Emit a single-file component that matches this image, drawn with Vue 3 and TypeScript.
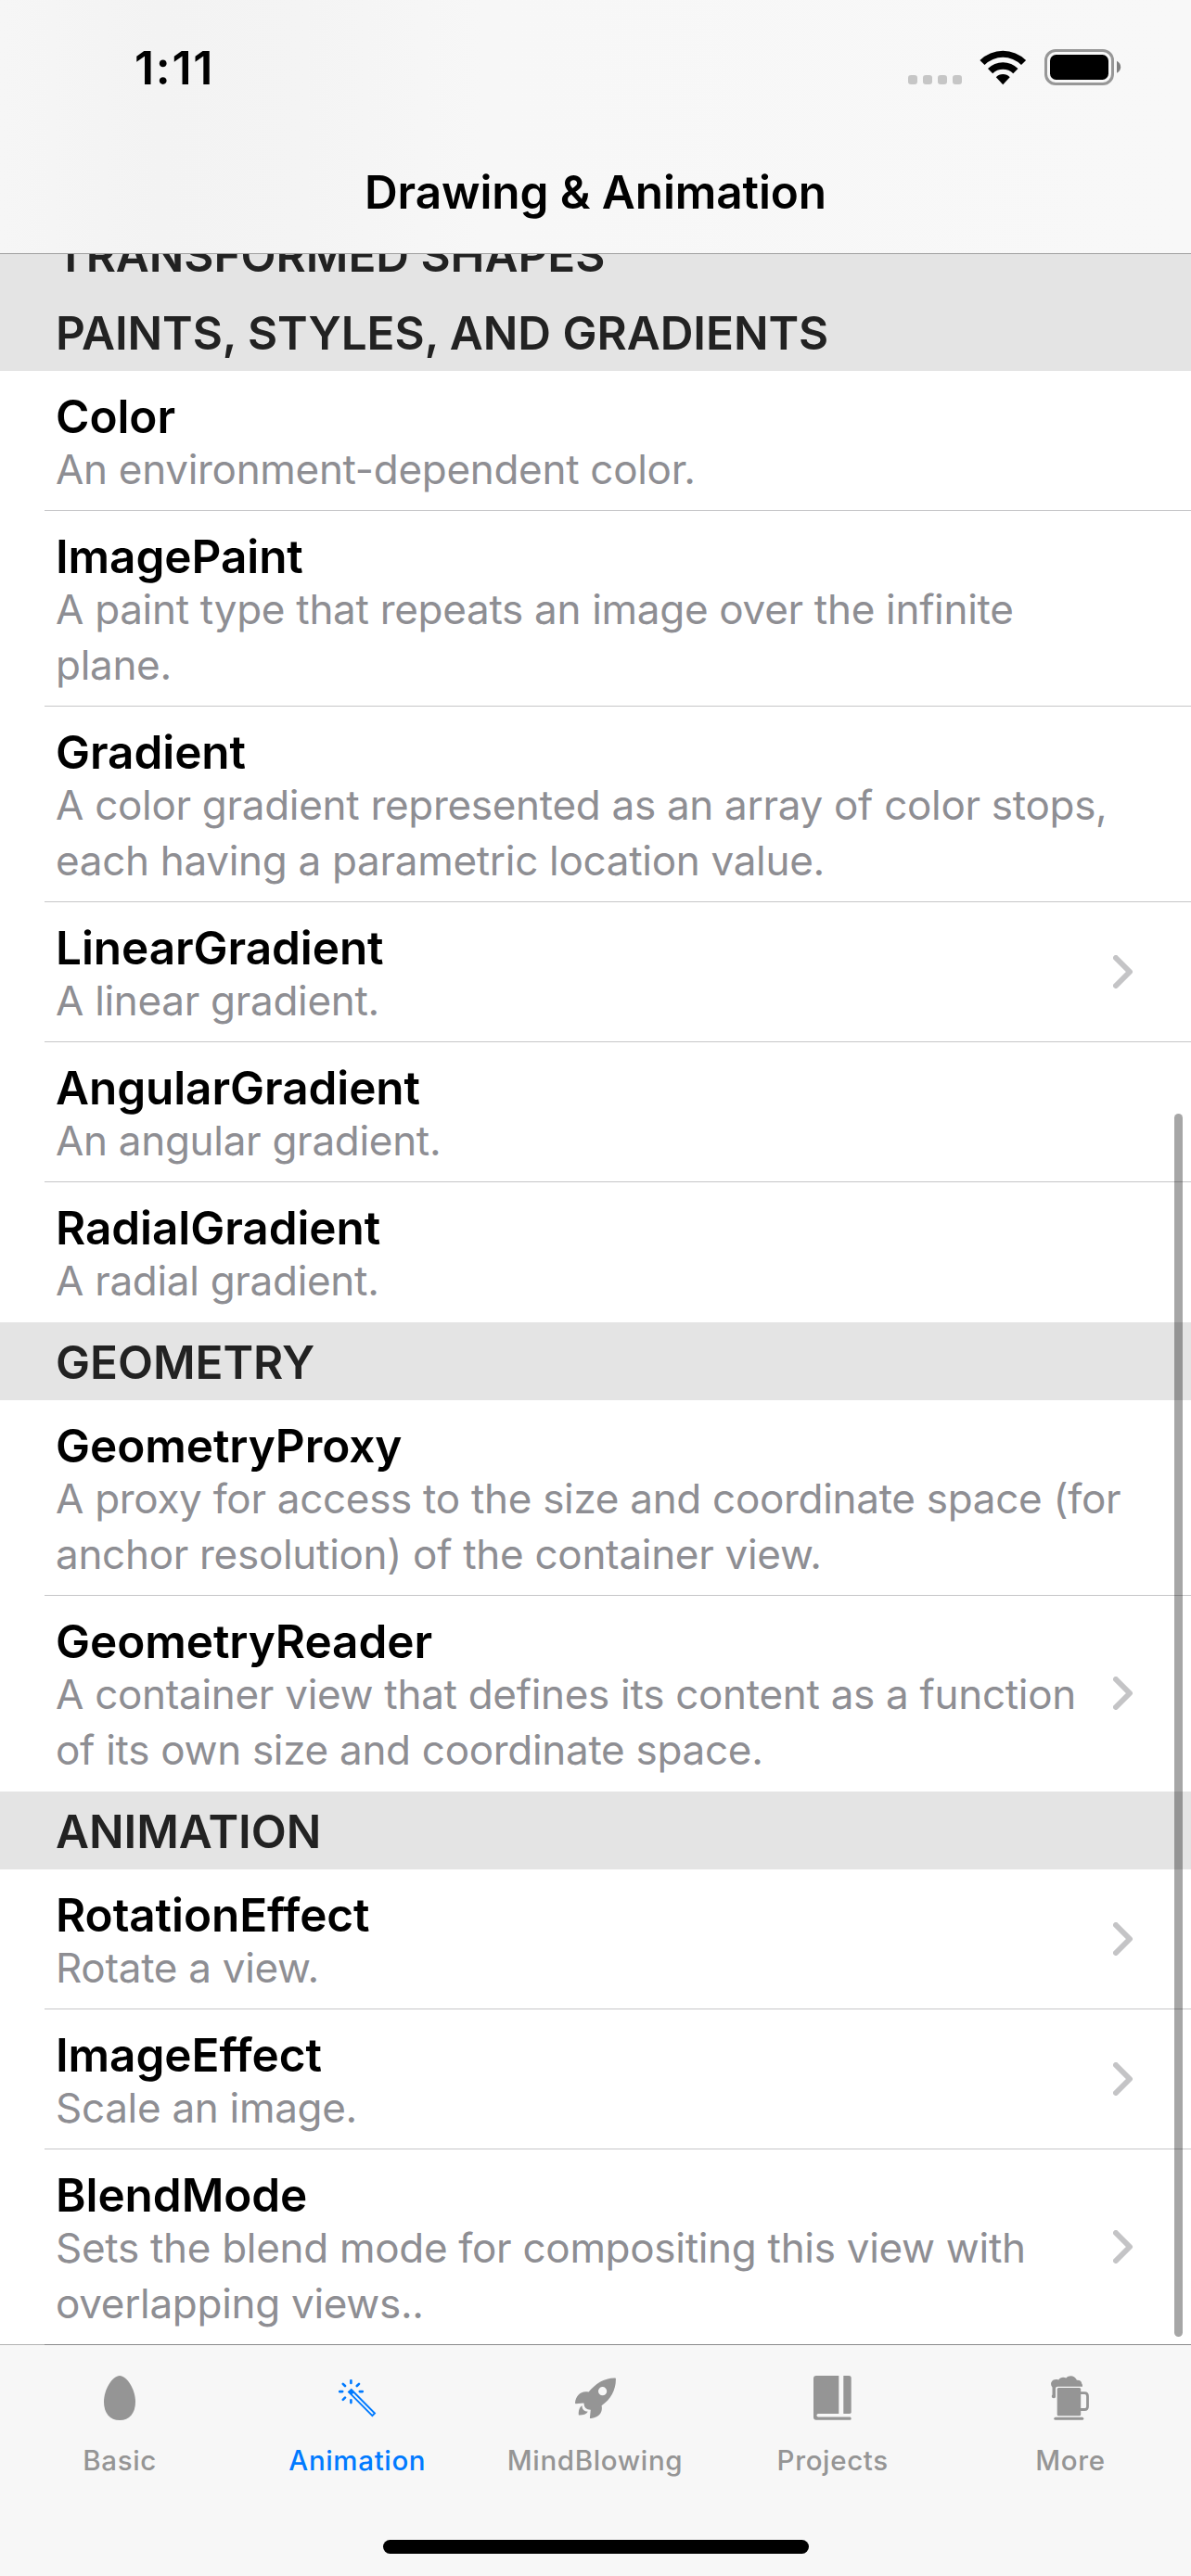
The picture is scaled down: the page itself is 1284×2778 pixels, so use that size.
<script setup lang="ts">
interface Item {
  title: string
  text: string
  link?: boolean
}
interface Section {
  name: string
  items: Item[]
}

const sections: Section[] = [
  { name: 'TRANSFORMED SHAPES', items: [] },
  {
    name: 'PAINTS, STYLES, AND GRADIENTS',
    items: [
      { title: 'Color', text: 'An environment-dependent color.' },
      { title: 'ImagePaint', text: 'A paint type that repeats an image over the infinite\nplane.' },
      { title: 'Gradient', text: 'A color gradient represented as an array of color stops,\neach having a parametric location value.' },
      { title: 'LinearGradient', text: 'A linear gradient.', link: true },
      { title: 'AngularGradient', text: 'An angular gradient.' },
      { title: 'RadialGradient', text: 'A radial gradient.' },
    ],
  },
  {
    name: 'GEOMETRY',
    items: [
      { title: 'GeometryProxy', text: 'A proxy for access to the size and coordinate space (for\nanchor resolution) of the container view.' },
      { title: 'GeometryReader', text: 'A container view that defines its content as a function\nof its own size and coordinate space.', link: true },
    ],
  },
  {
    name: 'ANIMATION',
    items: [
      { title: 'RotationEffect', text: 'Rotate a view.', link: true },
      { title: 'ImageEffect', text: 'Scale an image.', link: true },
      { title: 'BlendMode', text: 'Sets the blend mode for compositing this view with\noverlapping views..', link: true },
    ],
  },
]

const tabs = ['Basic', 'Animation', 'MindBlowing', 'Projects', 'More']
const activeTab = 'Animation'
</script>

<template>
  <div class="screen">
    <header class="nav">
      <div class="status">
        <span class="time">1:11</span>
        <div class="indicators">
          <div class="dots"><i v-for="n in 4" :key="n"></i></div>
          <svg class="wifi" width="51" height="38" viewBox="0 0 51 38">
            <path d="M.4 10.9A35.6 35.6 0 0 1 50.1 10.9L45 16A28 28 0 0 0 5.5 16Z" />
            <path d="M9 20A22.7 22.7 0 0 1 41.5 20L36.3 25.3A15.4 15.4 0 0 0 14.2 25.3Z" />
            <path d="M17.8 29.2A10.5 10.5 0 0 1 32.7 29.2L25.25 37.2Z" />
          </svg>
          <svg class="battery" width="83" height="40" viewBox="0 0 83 40">
            <rect x="1.5" y="1.5" width="72" height="36" rx="10.5" fill="none" stroke="#979797" stroke-width="3" />
            <rect x="6" y="6" width="63" height="27" rx="6.5" />
            <path d="M78 12.8Q82.2 15 82.2 19.3T78 25.8Z" fill="#7f7f7f" />
          </svg>
        </div>
      </div>
      <h1>Drawing &amp; Animation</h1>
    </header>

    <main class="list">
      <section v-for="s in sections" :key="s.name">
        <h2>{{ s.name }}</h2>
        <article v-for="item in s.items" :key="item.title" class="row">
          <div class="copy">
            <h3>{{ item.title }}</h3>
            <p>{{ item.text }}</p>
          </div>
          <svg v-if="item.link" class="chevron" width="22" height="36" viewBox="0 0 22 36">
            <path d="M3 3L18 18L3 33" fill="none" stroke="#c4c4c6" stroke-width="6" stroke-linecap="round" stroke-linejoin="round" />
          </svg>
        </article>
      </section>
      <div class="scrollbar"></div>
    </main>

    <footer class="tabbar">
      <nav class="tabs">
        <div v-for="t in tabs" :key="t" class="tab" :class="{ active: t === activeTab }">
          <div class="glyph">
            <svg v-if="t === 'Basic'" width="34" height="48" viewBox="0 0 34 48" fill="currentColor">
              <path d="M17 0C24.5 0 34 14.5 34 28C34 40.5 27.5 48 17 48S0 40.5 0 28C0 14.5 9.5 0 17 0Z" />
            </svg>
            <svg v-else-if="t === 'Animation'" width="41" height="41" viewBox="0 0 41 41" fill="none" stroke="currentColor">
              <path d="M13.4 1.2V4M13.4 22.3V25.1M1.2 13.1H4.2M22.8 13.1H25.8M4.8 4.8L7 7M22 4.8L19.8 7M7 19.6L4.8 21.8" stroke-width="2.6" stroke-linecap="round" />
              <path d="M13.7 11L39 36.5L36.4 39.1L11 13.6Z" stroke-width="1.9" />
              <path d="M13.7 10.4L17 13.7L13.7 17L10.4 13.7Z" fill="currentColor" stroke="none" />
            </svg>
            <svg v-else-if="t === 'MindBlowing'" width="44" height="44" viewBox="0 0 44 44" fill="currentColor">
              <path fill-rule="evenodd" d="M43.3.4Q43.8.5 43.9 1.2C44.2 13 38.5 23.8 28.6 30.2C30.2 38.2 25 43.2 16.4 44.1Q15.8 44.1 15.9 43.4L16.8 34.7Q9.9 34.9 9.4 27.4L.8 28.2Q-.1 28.2 0 27.3C.7 19.2 6.6 13.6 14.6 15.6C21.6 6.7 31.6 .1 43.3.4ZM29.6 10.1A4.6 4.6 0 1 0 29.6 19.3A4.6 4.6 0 1 0 29.6 10.1Z" />
              <path d="M7.4 30.2Q7.5 36.3 13.8 36.8C12.2 39.7 8.2 40.7 4.4 40.6Q3.8 40.6 3.8 40C3.6 36 4.6 31.8 7.4 30.2Z" />
            </svg>
            <svg v-else-if="t === 'Projects'" width="41" height="48" viewBox="0 0 41 48" fill="currentColor">
              <path d="M3 0H27.3V41H5.2Q3.4 41 3.4 42.8T5.2 44.6H39.4Q40.7 44.6 40.7 46.2T39.4 47.8H3Q0 47.8 0 44.8V3Q0 0 3 0Z" />
              <path d="M32.3 0H38.2Q40.7 0 40.7 2.5V39.3Q40.7 41 39 41H32.3Z" />
            </svg>
            <svg v-else width="42" height="48" viewBox="0 0 42 48" fill="currentColor">
              <path d="M34 11.7H7.2Q5 11.7 5 14V22.7Q5 24.3 2.9 24.3T.8 22.3Q.8 21.2 1.5 20.5V12.5Q-.6 10.5.3 7.3C1.3 4.3 4.8 3.2 8.2 4.4C9.8 1.9 13.2 1 16.3 2.5C19.3-.7 25-1 28 4.7C31 4.4 33.2 6 33.2 8.4Q34.2 9.4 34 11.7Z" />
              <rect x="6.7" y="13" width="25.5" height="30.3" rx="1.5" />
              <path d="M32 18.7H36.3Q39.5 18.7 39.5 22V33.2Q39.5 36.5 36.3 36.5H32" fill="none" stroke="currentColor" stroke-width="2.8" />
              <rect x="3.3" y="44.7" width="32" height="3.1" rx="1.5" />
            </svg>
          </div>
          <span>{{ t }}</span>
        </div>
      </nav>
      <div class="home"></div>
    </footer>
  </div>
</template>

<style>
body {
  margin: 0;
  background: #fff;
}
</style>

<style scoped>
.screen {
  display: flex;
  flex-direction: column;
  width: 1284px;
  height: 2778px;
  overflow: hidden;
  background: #fff;
  color: #000;
  font-family: Inter, "Liberation Sans", sans-serif;
  font-kerning: normal;
}
h1,
h2,
h3,
p {
  margin: 0;
}

.nav {
  box-sizing: border-box;
  flex: none;
  height: 274px;
  border-bottom: 1px solid #a0a0a0;
  background: linear-gradient(90deg, #f6f6f6 0, #f3f3f3 170px, #f4f4f4 330px, #f7f7f7 520px, #f8f8f8 100%);
}
.status {
  display: flex;
  justify-content: space-between;
  height: 132px;
  padding: 0 75px 0 145px;
}
.time {
  padding-top: 43px;
  font-size: 50px;
  font-weight: 600;
  line-height: 60px;
  letter-spacing: 1.7px;
}
.indicators {
  display: flex;
  align-items: flex-start;
  padding-top: 53px;
}
.dots {
  display: flex;
  gap: 6px;
  margin: 28px 19px 0 0;
}
.dots i {
  width: 10px;
  height: 10px;
  border-radius: 3px;
  background: #c6c6c6;
}
.wifi {
  margin: 1px 19px 0 0;
}
h1 {
  padding-top: 45px;
  font-size: 49.5px;
  font-weight: 600;
  line-height: 60px;
  letter-spacing: -0.1px;
  text-align: center;
}

.list {
  position: relative;
  flex: none;
  height: 2255px;
  display: flex;
  flex-direction: column;
  justify-content: flex-end;
  overflow: hidden;
}
h2 {
  height: 84px;
  padding-left: 60px;
  background: #e4e4e4;
  color: #222;
  font-size: 49.5px;
  font-weight: 600;
  line-height: 86px;
  letter-spacing: -0.05px;
  white-space: nowrap;
}
.row {
  display: flex;
  align-items: center;
  justify-content: space-between;
  margin-left: 48px;
  padding: 0 62px 0 12px;
  border-bottom: 1px solid #c6c6c8;
}
.row:last-child {
  border-bottom-color: transparent;
}
section:last-of-type .row:last-child {
  border-bottom-color: #c6c6c8;
}
.copy {
  padding: 18px 0 14px;
}
h3 {
  height: 58px;
  font-size: 49.5px;
  font-weight: 600;
  line-height: 62px;
  letter-spacing: -0.08px;
  white-space: nowrap;
}
p {
  color: #8e8e93;
  font-size: 44px;
  line-height: 60px;
  letter-spacing: -0.3px;
  white-space: pre;
}
.chevron {
  flex: none;
}
.scrollbar {
  position: absolute;
  top: 927px;
  right: 9px;
  width: 9px;
  height: 1319px;
  border-radius: 5px;
  background: rgba(0, 0, 0, 0.35);
}

.tabbar {
  position: relative;
  box-sizing: border-box;
  flex: none;
  display: flex;
  flex-direction: column;
  height: 250px;
  margin-top: -1px;
  border-top: 1px solid rgba(0, 0, 0, 0.3);
  background: #f7f7f7;
  background-clip: padding-box;
}
.tabs {
  display: flex;
  height: 210px;
  padding: 0 2px 0 1px;
}
.tab {
  flex: 1;
  display: flex;
  flex-direction: column;
  align-items: center;
  color: #959595;
}
.tab.active {
  color: #007aff;
}
.glyph {
  display: flex;
  align-items: center;
  height: 48px;
  margin-top: 33px;
}
.tab span {
  margin-top: 25px;
  font-size: 29.5px;
  font-weight: 500;
  line-height: 36px;
  letter-spacing: 0.65px;
}
.home {
  align-self: center;
  width: 459px;
  height: 15px;
  border-radius: 8px;
  background: #000;
}
</style>
